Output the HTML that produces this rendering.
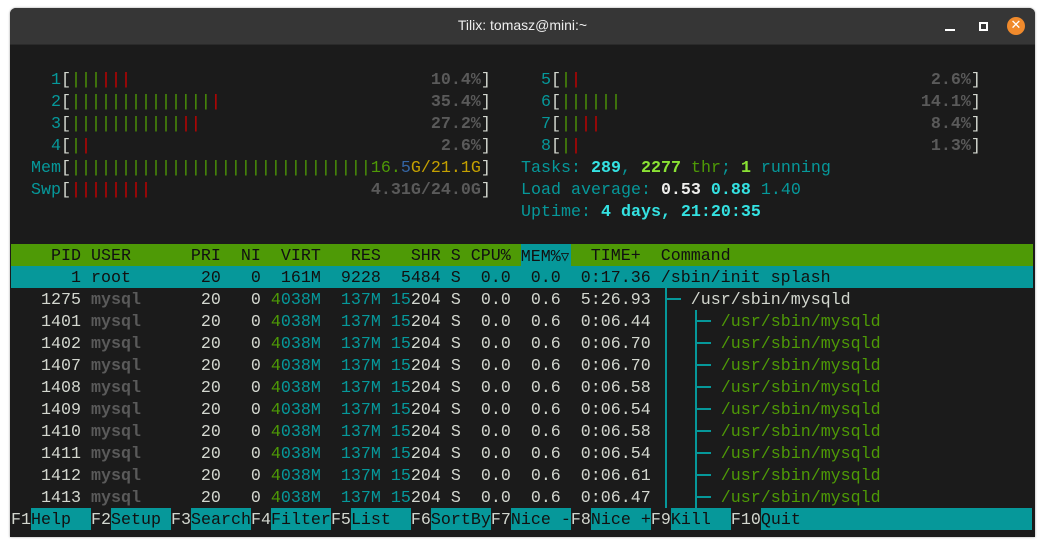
<!DOCTYPE html>
<html><head><meta charset="utf-8"><style>
html,body{margin:0;padding:0;background:#fff;width:1045px;height:545px;overflow:hidden}
#win{position:absolute;left:10px;top:8px;width:1025px;height:529px;background:#1b1b1b;border-radius:6px 6px 0 0;overflow:hidden;box-shadow:0 0 2px rgba(0,0,0,.4)}
#tb{position:absolute;left:0;top:0;width:1025px;height:36px;background:#363636;border-bottom:1px solid #2a2a2a}
#title{position:absolute;left:0;width:1025px;top:9px;text-align:center;color:#eee;font:14px "Liberation Sans",sans-serif}
.r{position:absolute;font-family:"Liberation Mono","DejaVu Sans Mono",monospace;font-size:16.667px;line-height:26px;height:22px;white-space:pre;color:#d3d7cf}
.t{color:#06989a}.w{color:#d3d7cf}.g{color:#4e9a06}.rd{color:#cc0000}.p{color:#5a5a5a;font-weight:bold}
.b{color:#3465a4}.y{color:#c4a000}.cb{color:#34e2e2;font-weight:bold}.gb{color:#8ae234;font-weight:bold}.wb{color:#eeeeec;font-weight:bold}
.u{color:#5a5a5a;font-weight:bold}.k{color:#111}
.fk{background:#06989a;color:#111;display:inline-block;height:22px;vertical-align:top}
.ln{position:absolute;background:#06989a}
</style></head><body>
<div id="win">
<div id="tb"><div id="title">Tilix: tomasz@mini:~</div>
<div style="position:absolute;left:935px;top:21px;width:10px;height:2px;background:#fff"></div>
<div style="position:absolute;left:969px;top:14px;width:5px;height:5px;border:2px solid #fff"></div>
<div style="position:absolute;left:997px;top:9px;width:18px;height:18px;border-radius:50%;background:#f08a2c;color:#fff;font:bold 13px 'DejaVu Sans',sans-serif;text-align:center;line-height:18px">✕</div>
</div>
</div>
<div id="term" style="position:absolute;left:0;top:0;transform:translate(1px,1px)">
<div class="r" style="left:10px;top:67px"><span class="t">    1</span><span class="w">[</span><span class="g">|||</span><span class="rd">|||</span>                              <span class="p">10.4%</span><span class="w">]</span></div>
<div class="r" style="left:10px;top:89px"><span class="t">    2</span><span class="w">[</span><span class="g">||||||||||||||</span><span class="rd">|</span>                     <span class="p">35.4%</span><span class="w">]</span></div>
<div class="r" style="left:10px;top:111px"><span class="t">    3</span><span class="w">[</span><span class="g">|||||||||||</span><span class="rd">||</span>                       <span class="p">27.2%</span><span class="w">]</span></div>
<div class="r" style="left:10px;top:133px"><span class="t">    4</span><span class="w">[</span><span class="g">|</span><span class="rd">|</span>                                   <span class="p">2.6%</span><span class="w">]</span></div>
<div class="r" style="left:10px;top:155px"><span class="t">  Mem</span><span class="w">[</span><span class="g">||||||||||||||||||||||||||||||16.</span><span class="b">5</span><span class="y">G/21.1G</span><span class="w">]</span></div>
<div class="r" style="left:10px;top:177px"><span class="t">  Swp</span><span class="w">[</span><span class="rd">||||||||</span>                      <span class="p">4.31G/24.0G</span><span class="w">]</span></div>

<div class="r" style="left:510px;top:67px"><span class="t">   5</span><span class="w">[</span><span class="g">|</span><span class="rd">|</span>                                   <span class="p">2.6%</span><span class="w">]</span></div>
<div class="r" style="left:510px;top:89px"><span class="t">   6</span><span class="w">[</span><span class="g">||||||</span>                              <span class="p">14.1%</span><span class="w">]</span></div>
<div class="r" style="left:510px;top:111px"><span class="t">   7</span><span class="w">[</span><span class="g">||</span><span class="rd">||</span>                                 <span class="p">8.4%</span><span class="w">]</span></div>
<div class="r" style="left:510px;top:133px"><span class="t">   8</span><span class="w">[</span><span class="g">|</span><span class="rd">|</span>                                   <span class="p">1.3%</span><span class="w">]</span></div>
<div class="r" style="left:520px;top:155px"><span class="t">Tasks: </span><span class="cb">289</span><span class="t">, </span><span class="gb">2277</span><span class="g"> thr</span><span class="t">; </span><span class="gb">1</span><span class="t"> running</span></div>
<div class="r" style="left:520px;top:177px"><span class="t">Load average: </span><span class="wb">0.53 </span><span class="cb">0.88 </span><span class="t">1.40</span></div>
<div class="r" style="left:520px;top:199px"><span class="t">Uptime: </span><span class="cb">4 days, 21:20:35</span></div>

<div class="r k" style="left:10px;top:243px;width:1022px;background:#4e9a06">    PID USER      PRI  NI  VIRT   RES   SHR S CPU% <span style="background:#06989a;display:inline-block;height:22px;vertical-align:top">MEM%<span style="display:inline-block;width:10px;font-family:'DejaVu Sans Mono',monospace;font-size:14px">▽</span></span>  TIME+  Command</div>
<div class="r k" style="left:10px;top:265px;width:1022px;background:#06989a">      1 root       20   0  161M  9228  5484 S  0.0  0.0  0:17.36 /sbin/init splash</div>
<div class="r" style="left:10px;top:287px">   1275 <span class="u">mysql</span>      20   0 <span class="g">4</span><span class="t">038M</span>  <span class="t">137M</span> <span class="t">15</span>204 S  0.0  0.6  5:26.93    /usr/sbin/mysqld</div>
<div class="r" style="left:10px;top:309px">   1401 <span class="u">mysql</span>      20   0 <span class="g">4</span><span class="t">038M</span>  <span class="t">137M</span> <span class="t">15</span>204 S  0.0  0.6  0:06.44       <span class="g">/usr/sbin/mysqld</span></div>
<div class="r" style="left:10px;top:331px">   1402 <span class="u">mysql</span>      20   0 <span class="g">4</span><span class="t">038M</span>  <span class="t">137M</span> <span class="t">15</span>204 S  0.0  0.6  0:06.70       <span class="g">/usr/sbin/mysqld</span></div>
<div class="r" style="left:10px;top:353px">   1407 <span class="u">mysql</span>      20   0 <span class="g">4</span><span class="t">038M</span>  <span class="t">137M</span> <span class="t">15</span>204 S  0.0  0.6  0:06.70       <span class="g">/usr/sbin/mysqld</span></div>
<div class="r" style="left:10px;top:375px">   1408 <span class="u">mysql</span>      20   0 <span class="g">4</span><span class="t">038M</span>  <span class="t">137M</span> <span class="t">15</span>204 S  0.0  0.6  0:06.58       <span class="g">/usr/sbin/mysqld</span></div>
<div class="r" style="left:10px;top:397px">   1409 <span class="u">mysql</span>      20   0 <span class="g">4</span><span class="t">038M</span>  <span class="t">137M</span> <span class="t">15</span>204 S  0.0  0.6  0:06.54       <span class="g">/usr/sbin/mysqld</span></div>
<div class="r" style="left:10px;top:419px">   1410 <span class="u">mysql</span>      20   0 <span class="g">4</span><span class="t">038M</span>  <span class="t">137M</span> <span class="t">15</span>204 S  0.0  0.6  0:06.58       <span class="g">/usr/sbin/mysqld</span></div>
<div class="r" style="left:10px;top:441px">   1411 <span class="u">mysql</span>      20   0 <span class="g">4</span><span class="t">038M</span>  <span class="t">137M</span> <span class="t">15</span>204 S  0.0  0.6  0:06.54       <span class="g">/usr/sbin/mysqld</span></div>
<div class="r" style="left:10px;top:463px">   1412 <span class="u">mysql</span>      20   0 <span class="g">4</span><span class="t">038M</span>  <span class="t">137M</span> <span class="t">15</span>204 S  0.0  0.6  0:06.61       <span class="g">/usr/sbin/mysqld</span></div>
<div class="r" style="left:10px;top:485px">   1413 <span class="u">mysql</span>      20   0 <span class="g">4</span><span class="t">038M</span>  <span class="t">137M</span> <span class="t">15</span>204 S  0.0  0.6  0:06.47       <span class="g">/usr/sbin/mysqld</span></div>

<div class="ln" style="left:664px;top:287px;width:2px;height:220px"></div>
<div class="ln" style="left:664px;top:297px;width:16px;height:2px"></div>
<div class="ln" style="left:694px;top:309px;width:2px;height:198px"></div>
<div class="ln" style="left:694px;top:319px;width:16px;height:2px"></div>
<div class="ln" style="left:694px;top:341px;width:16px;height:2px"></div>
<div class="ln" style="left:694px;top:363px;width:16px;height:2px"></div>
<div class="ln" style="left:694px;top:385px;width:16px;height:2px"></div>
<div class="ln" style="left:694px;top:407px;width:16px;height:2px"></div>
<div class="ln" style="left:694px;top:429px;width:16px;height:2px"></div>
<div class="ln" style="left:694px;top:451px;width:16px;height:2px"></div>
<div class="ln" style="left:694px;top:473px;width:16px;height:2px"></div>
<div class="ln" style="left:694px;top:495px;width:16px;height:2px"></div>

<div class="r" style="left:10px;top:507px;width:1022px">F1<span class="fk">Help  </span>F2<span class="fk">Setup </span>F3<span class="fk">Search</span>F4<span class="fk">Filter</span>F5<span class="fk">List  </span>F6<span class="fk">SortBy</span>F7<span class="fk">Nice -</span>F8<span class="fk">Nice +</span>F9<span class="fk">Kill  </span>F10<span class="fk" style="width:271px">Quit</span></div>
</div>
</body></html>
